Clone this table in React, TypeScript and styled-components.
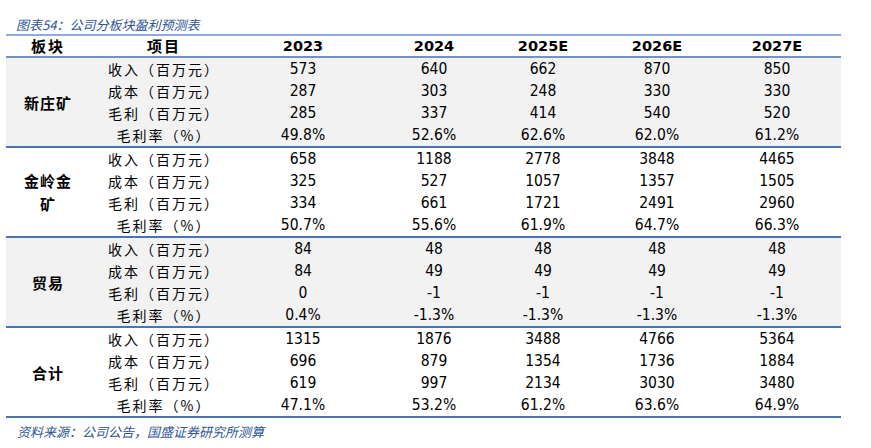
import React from "react";
import styled, { createGlobalStyle } from "styled-components";

const GlobalStyle = createGlobalStyle`
  body {
    margin: 0;
    background: #ffffff;
    font-family: "DejaVu Sans", "Noto Sans CJK SC", sans-serif;
    color: #000;
  }
`;

type Segment = {
  name: string;
  rows: string[][];
};

const years = ["2023", "2024", "2025E", "2026E", "2027E"];
const items = ["收入（百万元）", "成本（百万元）", "毛利（百万元）", "毛利率（%）"];

const segments: Segment[] = [
  {
    name: "新庄矿",
    rows: [
      ["573", "640", "662", "870", "850"],
      ["287", "303", "248", "330", "330"],
      ["285", "337", "414", "540", "520"],
      ["49.8%", "52.6%", "62.6%", "62.0%", "61.2%"],
    ],
  },
  {
    name: "金岭金矿",
    rows: [
      ["658", "1188", "2778", "3848", "4465"],
      ["325", "527", "1057", "1357", "1505"],
      ["334", "661", "1721", "2491", "2960"],
      ["50.7%", "55.6%", "61.9%", "64.7%", "66.3%"],
    ],
  },
  {
    name: "贸易",
    rows: [
      ["84", "48", "48", "48", "48"],
      ["84", "49", "49", "49", "49"],
      ["0", "-1", "-1", "-1", "-1"],
      ["0.4%", "-1.3%", "-1.3%", "-1.3%", "-1.3%"],
    ],
  },
  {
    name: "合计",
    rows: [
      ["1315", "1876", "3488", "4766", "5364"],
      ["696", "879", "1354", "1736", "1884"],
      ["619", "997", "2134", "3030", "3480"],
      ["47.1%", "53.2%", "61.2%", "63.6%", "64.9%"],
    ],
  },
];

const App = () => {
  return (
    <Page>
      <GlobalStyle />
      <Caption>图表54：公司分板块盈利预测表</Caption>
      <Table>
        <HeaderRow>
          <HeadCell>板块</HeadCell>
          <HeadCell>项目</HeadCell>
          {years.map((y) => (
            <YearCell key={y}>{y}</YearCell>
          ))}
        </HeaderRow>
        {segments.map((seg, i) => (
          <Group key={seg.name} shaded={i % 2 === 0}>
            <SegmentCell>{seg.name}</SegmentCell>
            {seg.rows.map((row, r) => (
              <React.Fragment key={r}>
                <ItemCell>{items[r]}</ItemCell>
                {row.map((v, c) => (
                  <ValueCell key={c}>{v}</ValueCell>
                ))}
              </React.Fragment>
            ))}
          </Group>
        ))}
      </Table>
      <Note>资料来源：公司公告，国盛证券研究所测算</Note>
    </Page>
  );
};

export default App;

const Page = styled.div`
  padding: 17px 30px 0 6px;
  width: 835px;
`;

const Caption = styled.div`
  height: 16px;
  line-height: 16px;
  margin: 0 0 1px 10px;
  font-family: "Noto Sans CJK SC", sans-serif;
  font-style: italic;
  font-size: 13px;
  color: #2f5597;
`;

const Table = styled.div`
  width: 835px;
  border-top: 2px solid #8faadc;
`;

const columns = "84px 148px 130px 132px 86px 142px 98px";

const HeaderRow = styled.div`
  display: grid;
  grid-template-columns: ${columns};
  padding-right: 15px;
  height: 20px;
  align-items: center;
  border-bottom: 2px solid #6f92c8;
`;

const HeadCell = styled.div`
  text-align: center;
  font-family: "Noto Sans CJK SC", sans-serif;
  font-weight: 700;
  font-size: 15px;
  line-height: 20px;
  letter-spacing: 2px;
`;

const YearCell = styled.div`
  text-align: center;
  font-family: "DejaVu Sans", sans-serif;
  font-weight: 700;
  font-size: 14.5px;
  line-height: 20px;
`;

const Group = styled.div<{ shaded: boolean }>`
  display: grid;
  grid-template-columns: ${columns};
  grid-template-rows: repeat(4, 22px);
  padding-right: 15px;
  align-items: center;
  background: ${(p) => (p.shaded ? "#f2f2f2" : "#ffffff")};
  border-bottom: 2px solid #4a73b2;
`;

const SegmentCell = styled.div`
  grid-row: 1 / span 4;
  grid-column: 1;
  padding: 0 14px;
  text-align: center;
  font-family: "Noto Sans CJK SC", sans-serif;
  font-weight: 700;
  font-size: 15px;
  line-height: 23px;
  letter-spacing: 1px;
`;

const ItemCell = styled.div`
  grid-column: 2;
  text-align: center;
  font-family: "Noto Sans CJK SC", sans-serif;
  font-size: 14px;
  line-height: 22px;
  letter-spacing: 2px;
`;

const ValueCell = styled.div`
  text-align: center;
  font-family: "DejaVu Sans Condensed", "DejaVu Sans", sans-serif;
  font-size: 15.5px;
  line-height: 22px;
`;

const Note = styled.div`
  margin: 6px 0 0 11px;
  height: 16px;
  line-height: 16px;
  font-family: "Noto Sans CJK SC", sans-serif;
  font-style: italic;
  font-size: 13px;
  color: #2f5597;
`;
